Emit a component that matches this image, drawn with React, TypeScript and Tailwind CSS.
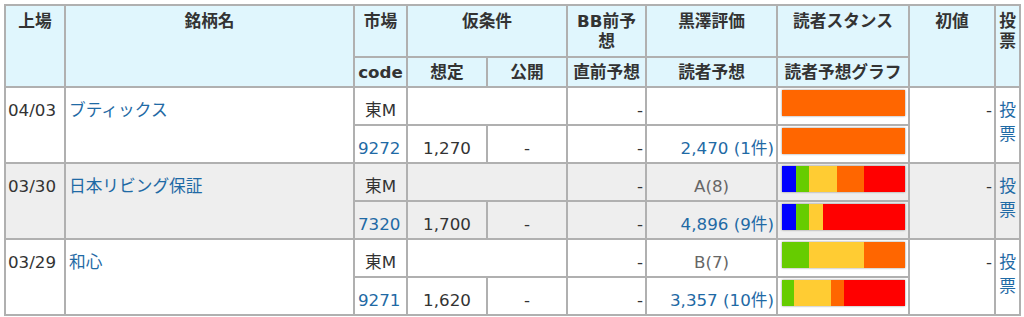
type IpoRow = {
  date: string;
  name: string;
  market: string;
  code: string;
  assumed: string;
  published: string;
  bbPrev: string;
  rating: string;
  forecast: string;
  stance: number[];
  forecastGraph: number[];
  opening: string;
  shaded: boolean;
};

const rows: IpoRow[] = [
  {
    date: "04/03",
    name: "ブティックス",
    market: "東M",
    code: "9272",
    assumed: "1,270",
    published: "-",
    bbPrev: "-",
    rating: "",
    forecast: "2,470 (1件)",
    stance: [0, 0, 0, 1, 0],
    forecastGraph: [0, 0, 0, 1, 0],
    opening: "-",
    shaded: false,
  },
  {
    date: "03/30",
    name: "日本リビング保証",
    market: "東M",
    code: "7320",
    assumed: "1,700",
    published: "-",
    bbPrev: "-",
    rating: "A(8)",
    forecast: "4,896 (9件)",
    stance: [1, 1, 2, 2, 3],
    forecastGraph: [1, 1, 1, 0, 6],
    opening: "-",
    shaded: true,
  },
  {
    date: "03/29",
    name: "和心",
    market: "東M",
    code: "9271",
    assumed: "1,620",
    published: "-",
    bbPrev: "-",
    rating: "B(7)",
    forecast: "3,357 (10件)",
    stance: [0, 2, 4, 3, 0],
    forecastGraph: [0, 1, 3, 1, 5],
    opening: "-",
    shaded: false,
  },
];

// blue / green / yellow / orange / red
const barColors = ["bg-[#0000ff]", "bg-[#66cc00]", "bg-[#ffcc33]", "bg-[#ff6600]", "bg-[#ff0000]"];

const cell = "border border-[#b0b0b0]";
const headTop = `${cell} bg-[#e0f6fd] font-bold text-center leading-[20px] pt-[5px]`;
const headSub = `${cell} bg-[#e0f6fd] font-bold flex items-center justify-center leading-[20px]`;

function VoteBar({ counts }: { counts: number[] }) {
  return (
    <div className="flex h-[26px] w-[123px] shadow-[0_0_2px_rgba(0,0,0,0.45)]">
      {counts.map((n, i) =>
        n > 0 ? <div key={i} className={barColors[i]} style={{ flex: `${n} 1 0` }} /> : null
      )}
    </div>
  );
}

function DataRows({ row }: { row: IpoRow }) {
  const bg = row.shaded ? "bg-[#eeeeee]" : "bg-white";
  const td = `${cell} ${bg} leading-[24px] pt-[10px]`;
  return (
    <>
      <div className={`${td} row-span-2 pl-[2px]`}>{row.date}</div>
      <div className={`${td} row-span-2 pl-[3px]`}>
        <a className="text-[#1f6aa5]">{row.name}</a>
      </div>
      <div className={`${td} text-center`}>{row.market}</div>
      <div className={`${td} col-span-2`} />
      <div className={`${td} text-right pr-[2px]`}>{row.bbPrev}</div>
      <div className={`${td} text-center text-[#666]`}>{row.rating}</div>
      <div className={`${cell} ${bg} pt-[2px] pl-[4px]`}>
        <VoteBar counts={row.stance} />
      </div>
      <div className={`${td} row-span-2 text-right pr-[2px]`}>{row.opening}</div>
      <div className={`${td} row-span-2 text-center`}>
        <a className="text-[#1f6aa5]">
          投<br />票
        </a>
      </div>

      <div className={`${td} pl-[3px] text-[#1f6aa5]`}>{row.code}</div>
      <div className={`${td} text-center`}>{row.assumed}</div>
      <div className={`${td} text-center`}>{row.published}</div>
      <div className={`${td} text-right pr-[2px]`}>{row.bbPrev}</div>
      <div className={`${td} text-right pr-[2px] text-[#1f6aa5]`}>{row.forecast}</div>
      <div className={`${cell} ${bg} pt-[2px] pl-[4px]`}>
        <VoteBar counts={row.forecastGraph} />
      </div>
    </>
  );
}

export default function App() {
  return (
    <div className="min-h-[317px] bg-white p-1 font-['DejaVu_Sans','Noto_Sans_CJK_JP',sans-serif] text-[16.7px] text-[#333]">
      <div className="grid w-fit border border-[#b0b0b0] grid-cols-[60px_289px_53px_80px_80px_79px_131px_132px_86px_25px] grid-rows-[52px_30px_repeat(6,38px)]">
        <div className={`${headTop} row-span-2`}>上場</div>
        <div className={`${headTop} row-span-2`}>銘柄名</div>
        <div className={headTop}>市場</div>
        <div className={`${headTop} col-span-2`}>仮条件</div>
        <div className={headTop}>
          BB前予
          <br />想
        </div>
        <div className={headTop}>黒澤評価</div>
        <div className={headTop}>読者スタンス</div>
        <div className={`${headTop} row-span-2`}>初値</div>
        <div className={`${headTop} row-span-2`}>
          投<br />票
        </div>

        <div className={headSub}>code</div>
        <div className={headSub}>想定</div>
        <div className={headSub}>公開</div>
        <div className={headSub}>直前予想</div>
        <div className={headSub}>読者予想</div>
        <div className={headSub}>読者予想グラフ</div>

        {rows.map((row) => (
          <DataRows key={row.code} row={row} />
        ))}
      </div>
    </div>
  );
}
